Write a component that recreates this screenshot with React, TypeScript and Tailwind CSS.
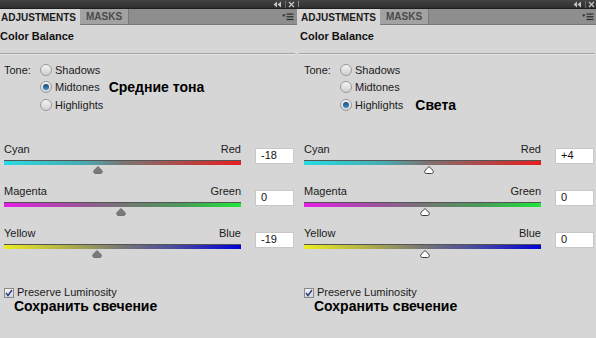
import React from 'react'

type Slider = { left: string; right: string; value: string; pos: number; gradient: string }

type PanelProps = {
  tone: 'Shadows' | 'Midtones' | 'Highlights'
  caption: string
  captionGap: number
  sliders: Slider[]
  hollowThumb?: boolean
  leftEdge?: boolean
}

const font = { fontFamily: '"Liberation Sans", Arial, sans-serif' }

function Radio({ checked }: { checked: boolean }) {
  return (
    <span className="relative inline-block w-[12px] h-[12px] rounded-full border border-[#9a9a9a] bg-gradient-to-b from-[#f4f4f4] to-[#d0d0d0]">
      {checked && (
        <span className="absolute left-[2px] top-[2px] w-[6px] h-[6px] rounded-full bg-gradient-to-b from-[#1a4d7a] to-[#3a8fd0]" />
      )}
    </span>
  )
}

function Thumb({ hollow }: { hollow?: boolean }) {
  return (
    <svg width="11" height="8" viewBox="0 0 11 8">
      <path
        d="M5.5 0.5 L9 4 Q10.5 5.5 9.5 6.8 Q9 7.5 8 7.5 L3 7.5 Q2 7.5 1.5 6.8 Q0.5 5.5 2 4 Z"
        fill={hollow ? '#ffffff' : '#7a7a7a'}
        stroke={hollow ? '#2a2a2a' : '#6a6a6a'}
        strokeWidth="0.9"
      />
    </svg>
  )
}

function MenuIcon() {
  return (
    <svg width="12" height="8" viewBox="0 0 12 8">
      <path d="M0 1.5 L3.5 1.5 L1.75 4 Z" fill="#2a2a2a" />
      <rect x="4.5" y="0.5" width="7" height="1.2" fill="#2a2a2a" />
      <rect x="4.5" y="3.2" width="7" height="1.2" fill="#2a2a2a" />
      <rect x="4.5" y="5.9" width="7" height="1.2" fill="#2a2a2a" />
    </svg>
  )
}

// collapse arrows + close cross in the dark title strip
function TitleIcons() {
  return (
    <svg width="22" height="7" viewBox="0 0 22 7">
      <path d="M4 0.5 L0.5 3.5 L4 6.5 Z M8 0.5 L4.5 3.5 L8 6.5 Z" fill="#c4c4c4" />
      <rect x="12" y="0" width="1" height="7" fill="#6a6a6a" />
      <path d="M16 1 L21 6 M21 1 L16 6" stroke="#c4c4c4" strokeWidth="1.3" />
    </svg>
  )
}

function Panel({ tone, caption, captionGap, sliders, hollowThumb, leftEdge }: PanelProps) {
  const tones: PanelProps['tone'][] = ['Shadows', 'Midtones', 'Highlights']
  return (
    <div className="relative w-[300px] shrink-0 h-[338px] bg-[#d6d6d6] flex flex-col" style={font}>
      <div className="h-[8px] bg-gradient-to-b from-[#444444] to-[#2e2e2e] flex items-center justify-end pr-[2px]">
        {leftEdge && <span className="absolute left-[1px] top-[1px] w-[1px] h-[6px] bg-[#888]" />}
        <TitleIcons />
      </div>
      <div className="h-[17px] bg-[#8e8e8e] border-t border-[#1e1e1e] flex items-stretch">
        <div className="w-[83px] bg-[#d6d6d6] flex items-center pl-[4px] text-[10px] font-bold text-[#1a1a1a]">
          ADJUSTMENTS
        </div>
        <div className="w-[49px] bg-[#a2a2a2] border-r border-[#7a7a7a] border-b border-b-[#7a7a7a] flex items-center justify-center text-[10px] font-bold text-[#4a4a4a]">
          MASKS
        </div>
        <div className="flex-1 border-b border-[#7a7a7a] flex items-center justify-end pr-[3px]">
          <MenuIcon />
        </div>
      </div>
      <div className="h-[22px] flex items-center pl-[3px] text-[11px] font-bold text-[#111]">Color Balance</div>
      <div className="mt-[6px] mx-[2px] h-[2px] border-t border-[#a4a4a4] border-b border-b-[#e6e6e6]" />
      <div className="pt-[6px] flex flex-col">
        {tones.map((t, i) => (
          <div key={t} className="h-[17.5px] flex items-center">
            <span className="w-[43px] pl-[7px] text-[11px] text-[#1a1a1a]">{i === 0 ? 'Tone:' : ''}</span>
            <Radio checked={t === tone} />
            <span className="ml-[3px] text-[11px] text-[#1a1a1a]">{t}</span>
            {t === tone && (
              <span className="text-[14px] font-bold text-black leading-none" style={{ marginLeft: captionGap }}>
                {caption}
              </span>
            )}
          </div>
        ))}
      </div>
      <div className="pt-[29px] flex flex-col gap-[14px]">
        {sliders.map((s) => (
          <div key={s.left} className="h-[28px] flex items-start">
            <div className="ml-[7px] w-[237px] flex flex-col">
              <div className="h-[14px] flex items-center justify-between text-[11px] text-[#1a1a1a]">
                <span>{s.left}</span>
                <span>{s.right}</span>
              </div>
              <div className="mt-[3px] h-[5px] border-t border-[#555] relative" style={{ backgroundImage: s.gradient }}>
                <div className="absolute top-[5px] -translate-x-1/2" style={{ left: `${s.pos}px` }}>
                  <Thumb hollow={hollowThumb} />
                </div>
              </div>
            </div>
            <div className="ml-[14px] mt-[5px] w-[39px] h-[16px] bg-white border border-[#c8c8c8] flex items-center pl-[5px] text-[11px] text-[#111]">
              {s.value}
            </div>
          </div>
        ))}
      </div>
      <div className="mt-[32px] pl-[7px] flex items-center h-[12px]">
        <span className="w-[10px] h-[10px] border border-[#8a8a8a] bg-gradient-to-b from-[#f4f4f4] to-[#d6d6d6] flex items-center justify-center">
          <svg width="8" height="8" viewBox="0 0 8 8">
            <path d="M1 4 L3 6.5 L7 1" fill="none" stroke="#2b3a8a" strokeWidth="1.4" />
          </svg>
        </span>
        <span className="ml-[3px] text-[11px] text-[#1a1a1a]">Preserve Luminosity</span>
      </div>
      <div className="mt-[-1px] pl-[17px] text-[14px] font-bold text-black leading-[16px]">Сохранить свечение</div>
    </div>
  )
}

const cyanRed = 'linear-gradient(to right, #24dce4, #4aa8ae 35%, #7a7676 50%, #b04848 75%, #e81e1e)'
const magGreen = 'linear-gradient(to right, #e61ee6, #a050a0 30%, #747474 50%, #4a9a5a 75%, #1ee63a)'
const yelBlue = 'linear-gradient(to right, #ecec20, #a8a850 30%, #767676 50%, #4a4aa0 72%, #0000d8)'

export default function App() {
  return (
    <div className="w-[596px] h-[338px] overflow-hidden flex bg-[#d6d6d6]">
      <div className="ml-[-3px] flex">
        <Panel
          tone="Midtones"
          caption="Средние тона"
          captionGap={9}
          sliders={[
            { left: 'Cyan', right: 'Red', value: '-18', pos: 94, gradient: cyanRed },
            { left: 'Magenta', right: 'Green', value: '0', pos: 117, gradient: magGreen },
            { left: 'Yellow', right: 'Blue', value: '-19', pos: 93, gradient: yelBlue },
          ]}
        />
        <Panel
          tone="Highlights"
          caption="Света"
          captionGap={12}
          hollowThumb
          leftEdge
          sliders={[
            { left: 'Cyan', right: 'Red', value: '+4', pos: 125, gradient: cyanRed },
            { left: 'Magenta', right: 'Green', value: '0', pos: 121, gradient: magGreen },
            { left: 'Yellow', right: 'Blue', value: '0', pos: 121, gradient: yelBlue },
          ]}
        />
      </div>
    </div>
  )
}
